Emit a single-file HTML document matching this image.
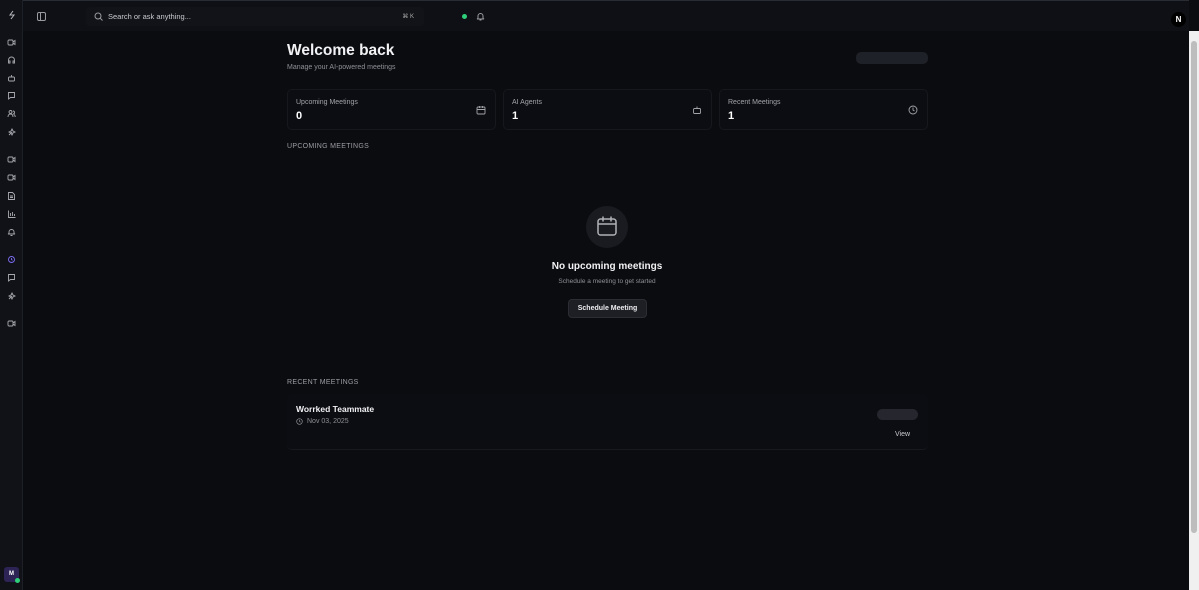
<!DOCTYPE html>
<html><head><meta charset="utf-8"><style>
*{margin:0;padding:0;box-sizing:border-box}
body{width:1199px;height:590px;background:#0b0c10;font-family:"Liberation Sans",sans-serif;color:#e8e8ea;position:relative;overflow:hidden}
.side{position:absolute;left:0;top:0;width:23px;height:590px;background:#111217;border-right:1px solid #1e2027}
.top{position:absolute;left:23px;top:0;right:10px;height:31px;background:#0f1015;border-top:1px solid #2a2c33}
.search{position:absolute;left:86px;top:6px;width:338px;height:19px;background:#121318;border-radius:4px;font-size:7.5px;color:#c9cad0;padding:5px 0 0 22px}
.card{position:absolute;top:89px;height:41px;border:1px solid #17181e;border-radius:5px;background:#0c0d12}
.card .l{position:absolute;left:8px;top:9px;font-size:7px;color:#a3a4ab}
.card .n{position:absolute;left:8px;top:20px;font-size:11px;font-weight:bold;color:#fff}
.card svg{position:absolute;right:9px;top:15px;width:10px;height:10px}
.sb{position:absolute;right:0;top:31px;width:10px;height:559px;background:#f0f0f0}
.sb div{position:absolute;left:2px;top:10px;width:6px;height:492px;background:#bdbdbd;border-radius:3px}
</style></head><body>
<div class="side">
<svg style="position:absolute;left:7px;top:10px" width="10" height="10" viewBox="0 0 10 10" fill="none" stroke="#b8b9c0" stroke-width="1"><path d="M6 1L3 5h4L4 9"/></svg>
</div>
<div class="top">
<svg style="position:absolute;left:14px;top:11px" width="9" height="9" viewBox="0 0 9 9" fill="none" stroke="#9a9ba2"><rect x=".5" y=".5" width="8" height="8" rx="1.5"/><path d="M3.5 .5v8"/></svg>
<div class="search" style="left:63px">Search or ask anything...<svg style="position:absolute;left:8px;top:5px" width="9" height="9" viewBox="0 0 9 9" fill="none" stroke="#9a9ba2"><circle cx="4" cy="4" r="3"/><path d="M6.2 6.2L8.5 8.5"/></svg><span style="position:absolute;right:10px;top:6px;font-size:6px;color:#aaa">⌘ K</span></div>
<div style="position:absolute;left:439px;top:13px;width:5px;height:5px;border-radius:50%;background:#2fcf7a"></div>
<svg style="position:absolute;left:453px;top:11px" width="9" height="9" viewBox="0 0 9 9" fill="none" stroke="#9a9ba2"><path d="M2 6.5V4a2.5 2.5 0 015 0v2.5l1 .5H1zM3.5 8h2"/></svg>
<div style="position:absolute;left:1148px;top:11px;width:15px;height:15px;border-radius:50%;background:#000;color:#fff;font-size:8px;font-weight:bold;text-align:center;line-height:15px">N</div>
</div>
<div class="sb"><div></div></div>

<div style="position:absolute;left:287px;top:42px;font-size:15.5px;font-weight:bold;color:#f2f2f4">Welcome back</div>
<div style="position:absolute;left:287px;top:64px;font-size:7px;color:#8f9097">Manage your AI-powered meetings</div>
<div style="position:absolute;left:856px;top:52px;width:72px;height:12px;border-radius:5px;background:#1f2128"></div>

<div class="card" style="left:287px;width:209px"><div class="l">Upcoming Meetings</div><div class="n">0</div><svg viewBox="0 0 10 10" fill="none" stroke="#a3a4ab" stroke-width=".9"><rect x="1" y="2" width="8" height="7" rx="1"/><path d="M1 4.5h8M3.5 1v2M6.5 1v2"/></svg></div>
<div class="card" style="left:503px;width:209px"><div class="l">AI Agents</div><div class="n">1</div><svg viewBox="0 0 10 10" fill="none" stroke="#a3a4ab" stroke-width=".9"><rect x="1.5" y="3.5" width="7" height="5" rx="1"/><path d="M5 1.5v2M3.5 6h0M6.5 6h0"/></svg></div>
<div class="card" style="left:719px;width:209px"><div class="l">Recent Meetings</div><div class="n">1</div><svg viewBox="0 0 10 10" fill="none" stroke="#a3a4ab" stroke-width=".9"><circle cx="5" cy="5" r="4"/><path d="M5 2.5V5l1.5 1"/></svg></div>

<div style="position:absolute;left:287px;top:143px;font-size:7px;color:#9c9da4;letter-spacing:.3px">UPCOMING MEETINGS</div>
<div style="position:absolute;left:586px;top:206px;width:42px;height:42px;border-radius:50%;background:#1a1b21"></div>
<svg style="position:absolute;left:596px;top:215px" width="22" height="22" viewBox="0 0 22 22" fill="none" stroke="#b0b1b8" stroke-width="1.5"><rect x="2" y="4" width="18" height="16" rx="2.5"/><path d="M2 9h18M7 1.5v5M15 1.5v5"/></svg>
<div style="position:absolute;left:507px;top:261px;width:200px;text-align:center;font-size:10px;font-weight:bold;color:#f2f2f4">No upcoming meetings</div>
<div style="position:absolute;left:507px;top:278px;width:200px;text-align:center;font-size:6.5px;color:#8f9097">Schedule a meeting to get started</div>
<div style="position:absolute;left:568px;top:299px;width:79px;height:19px;border-radius:4px;background:#1e1f25;border:1px solid #2c2d34;font-size:7px;font-weight:bold;color:#ececee;text-align:center;line-height:17px">Schedule Meeting</div>

<div style="position:absolute;left:287px;top:379px;font-size:7px;color:#9c9da4;letter-spacing:.3px">RECENT MEETINGS</div>
<div style="position:absolute;left:287px;top:394px;width:641px;height:56px;border-radius:5px;background:#0c0d12;border-bottom:1px solid #18191f"></div>
<div style="position:absolute;left:296px;top:404px;font-size:8.5px;font-weight:bold;color:#f2f2f4">Worrked Teammate</div>
<svg style="position:absolute;left:296px;top:418px" width="7" height="7" viewBox="0 0 10 10" fill="none" stroke="#8f9097"><circle cx="5" cy="5" r="4"/><path d="M5 2.5V5l1.5 1"/></svg>
<div style="position:absolute;left:307px;top:418px;font-size:7px;color:#8f9097">Nov 03, 2025</div>
<div style="position:absolute;left:877px;top:409px;width:41px;height:11px;border-radius:6px;background:#26272e"></div>
<div style="position:absolute;left:895px;top:431px;font-size:7px;color:#c9cad0">View</div>

<div style="position:absolute;left:4px;top:567px;width:15px;height:15px;border-radius:3px;background:#2d2354;color:#fff;font-size:6px;font-weight:bold;text-align:center;line-height:15px">M</div>
<div style="position:absolute;left:15px;top:578px;width:5px;height:5px;border-radius:50%;background:#2fcf7a"></div>

<svg style="position:absolute;left:0;top:0" width="23" height="340" fill="none" stroke="#a8a9b0" stroke-width=".9">
<g transform="translate(8,39)"><rect x="0" y="1" width="5" height="5" rx="1"/><path d="M5 3l2-1.5v4L5 4"/></g>
<g transform="translate(8,56)"><path d="M.5 6V4a3 3 0 016 0v2M.5 5h1.5v2H.5zM5 5h1.5v2H5z"/></g>
<g transform="translate(8,74)"><rect x=".5" y="3" width="6" height="4" rx="1"/><path d="M3.5 1v2"/></g>
<g transform="translate(8,92)"><path d="M.5.5h6v5H2.5L.5 7z"/></g>
<g transform="translate(8,110)"><circle cx="2.5" cy="2" r="1.5"/><path d="M0 7c0-2 1-3 2.5-3S5 5 5 7M5 1a1.5 1.5 0 010 3M6 4.5c1 .5 1.2 1.5 1.2 2.5"/></g>
<g transform="translate(8,128)"><path d="M1 7l3-3M4 1l1 2 2 1-2 1-1 2-1-2-2-1 2-1z"/></g>
<g transform="translate(8,156)"><rect x="0" y="1" width="5" height="5" rx="1"/><path d="M5 3l2-1.5v4L5 4"/></g>
<g transform="translate(8,174)"><rect x="0" y="1" width="5" height="5" rx="1"/><path d="M5 3l2-1.5v4L5 4"/></g>
<g transform="translate(8,192)"><path d="M.5.5h4l2 2v5h-6zM2 4h3M2 5.5h3"/></g>
<g transform="translate(8,210)"><path d="M.5.5v7h7M2.5 6V3M4.5 6V2M6.5 6V4"/></g>
<g transform="translate(8,228)"><path d="M1 5.5V4a2.5 2.5 0 015 0v1.5l1 .5H0zM2.5 7.5h2"/></g>
<g transform="translate(8,256)" stroke="#7b6cf0"><circle cx="3.5" cy="3.5" r="3"/><path d="M3.5 2v1.5l1 .8"/></g>
<g transform="translate(8,274)"><path d="M.5.5h6v5H2.5L.5 7z"/></g>
<g transform="translate(8,292)"><path d="M1 7l3-3M4 1l1 2 2 1-2 1-1 2-1-2-2-1 2-1z"/></g>
<g transform="translate(8,320)"><rect x="0" y="1" width="5" height="5" rx="1"/><path d="M5 3l2-1.5v4L5 4"/></g>
</svg>
</body></html>
